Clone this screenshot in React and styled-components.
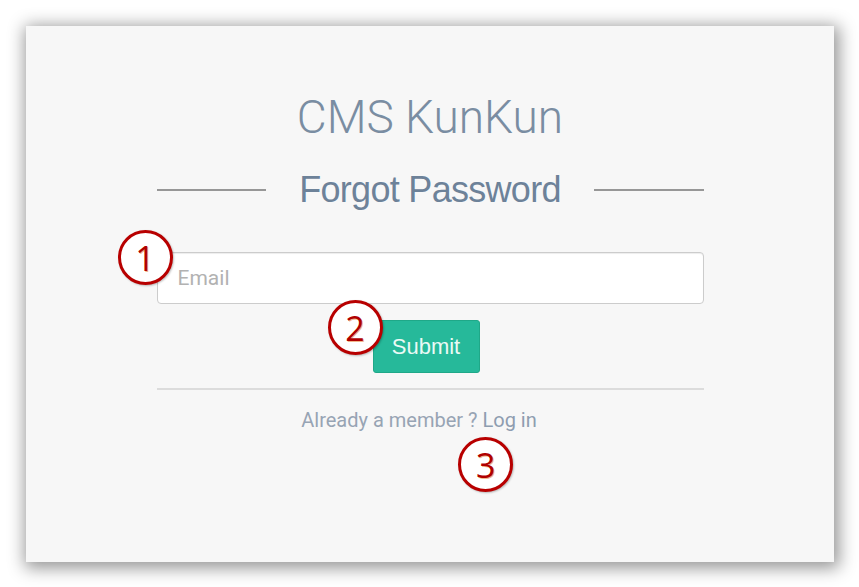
import React from "react";
import styled, { createGlobalStyle } from "styled-components";

const GlobalStyle = createGlobalStyle`
  html, body {
    margin: 0;
    padding: 0;
    background: #ffffff;
  }
  body {
    font-family: Roboto, "Liberation Sans", Arial, sans-serif;
  }
`;

const Page = styled.div`
  padding: 26px 25px 25px 26px;
`;

const Card = styled.div`
  width: 808px;
  height: 536px;
  box-sizing: border-box;
  background: #f7f7f7;
  box-shadow: 2px 3px 16px 3px rgba(0, 0, 0, 0.42);
  padding-top: 64px;
  display: flex;
  flex-direction: column;
  align-items: center;
`;

const Title = styled.h1`
  margin: 0;
  font-family: Roboto, sans-serif;
  font-weight: 300;
  font-size: 46px;
  line-height: 54px;
  color: #7a8da2;
`;

const Form = styled.form`
  width: 547px;
  margin-top: 26px;
  display: flex;
  flex-direction: column;
  align-items: center;
`;

const HeadingRow = styled.div`
  width: 100%;
  display: flex;
  align-items: center;
  gap: 33px;
`;

const Rule = styled.span`
  flex: 1;
  height: 2px;
  background: #979797;
`;

const Heading = styled.h2`
  margin: 0;
  font-family: "Liberation Sans", Arial, sans-serif;
  font-weight: 400;
  font-size: 36px;
  line-height: 40px;
  letter-spacing: -0.7px;
  color: #6d8299;
`;

const Field = styled.div`
  position: relative;
  width: 100%;
  margin-top: 42px;
`;

const Input = styled.input`
  width: 100%;
  height: 52px;
  box-sizing: border-box;
  border: 1px solid #cccccc;
  border-radius: 4px;
  background: #ffffff;
  box-shadow: inset 0 1px 1px rgba(0, 0, 0, 0.075);
  padding: 0 20px;
  font-family: Roboto, sans-serif;
  font-size: 21px;
  color: #555;
  outline: none;

  &::placeholder {
    color: #b2b2b2;
  }
`;

const ButtonWrap = styled.div`
  position: relative;
  margin-top: 16px;
  margin-right: 8px;
`;

const Button = styled.button`
  width: 107px;
  height: 53px;
  border: 1px solid #1fa888;
  border-radius: 3px;
  background: #26b99a;
  color: #eafaf5;
  font-family: "Liberation Sans", Arial, sans-serif;
  font-size: 22px;
  cursor: pointer;
`;

const Divider = styled.div`
  width: 100%;
  height: 2px;
  background: #dcdcdc;
  margin-top: 15px;
`;

const Footer = styled.p`
  margin: 18px 22px 0 0;
  font-family: Roboto, sans-serif;
  font-size: 20px;
  line-height: 24px;
  color: #97a4b4;
`;

const FooterText = styled.span`
  position: relative;
  display: inline-block;
`;

const LoginLink = styled.a`
  color: #8e9db0;
  text-decoration: none;
`;

const Marker = styled.span`
  position: absolute;
  left: ${(p) => p.$left}px;
  top: ${(p) => p.$top}px;
  width: 55px;
  height: 55px;
  box-sizing: border-box;
  border: 3.5px solid #b80000;
  border-radius: 50%;
  background: #ffffff;
  box-shadow: 1px 1px 2px rgba(0, 0, 0, 0.25);
  display: flex;
  align-items: center;
  justify-content: center;
  font-family: "Open Sans", "DejaVu Sans", sans-serif;
  font-size: 34px;
  line-height: 1;
  color: #b00000;
  text-shadow: 1px 1px 0 rgba(230, 120, 40, 0.55);
  z-index: 2;
`;

export default function App() {
  return (
    <>
      <GlobalStyle />
      <Page>
        <Card>
          <Title>CMS KunKun</Title>
          <Form onSubmit={(e) => e.preventDefault()}>
            <HeadingRow>
              <Rule />
              <Heading>Forgot Password</Heading>
              <Rule />
            </HeadingRow>
            <Field>
              <Input type="email" placeholder="Email" />
              <Marker $left={-39} $top={-22}>1</Marker>
            </Field>
            <ButtonWrap>
              <Button type="submit">Submit</Button>
              <Marker $left={-45} $top={-20}>2</Marker>
            </ButtonWrap>
            <Divider />
            <Footer>
              <FooterText>
                Already a member ? <LoginLink href="#">Log in</LoginLink>
                <Marker $left={157} $top={29}>3</Marker>
              </FooterText>
            </Footer>
          </Form>
        </Card>
      </Page>
    </>
  );
}
